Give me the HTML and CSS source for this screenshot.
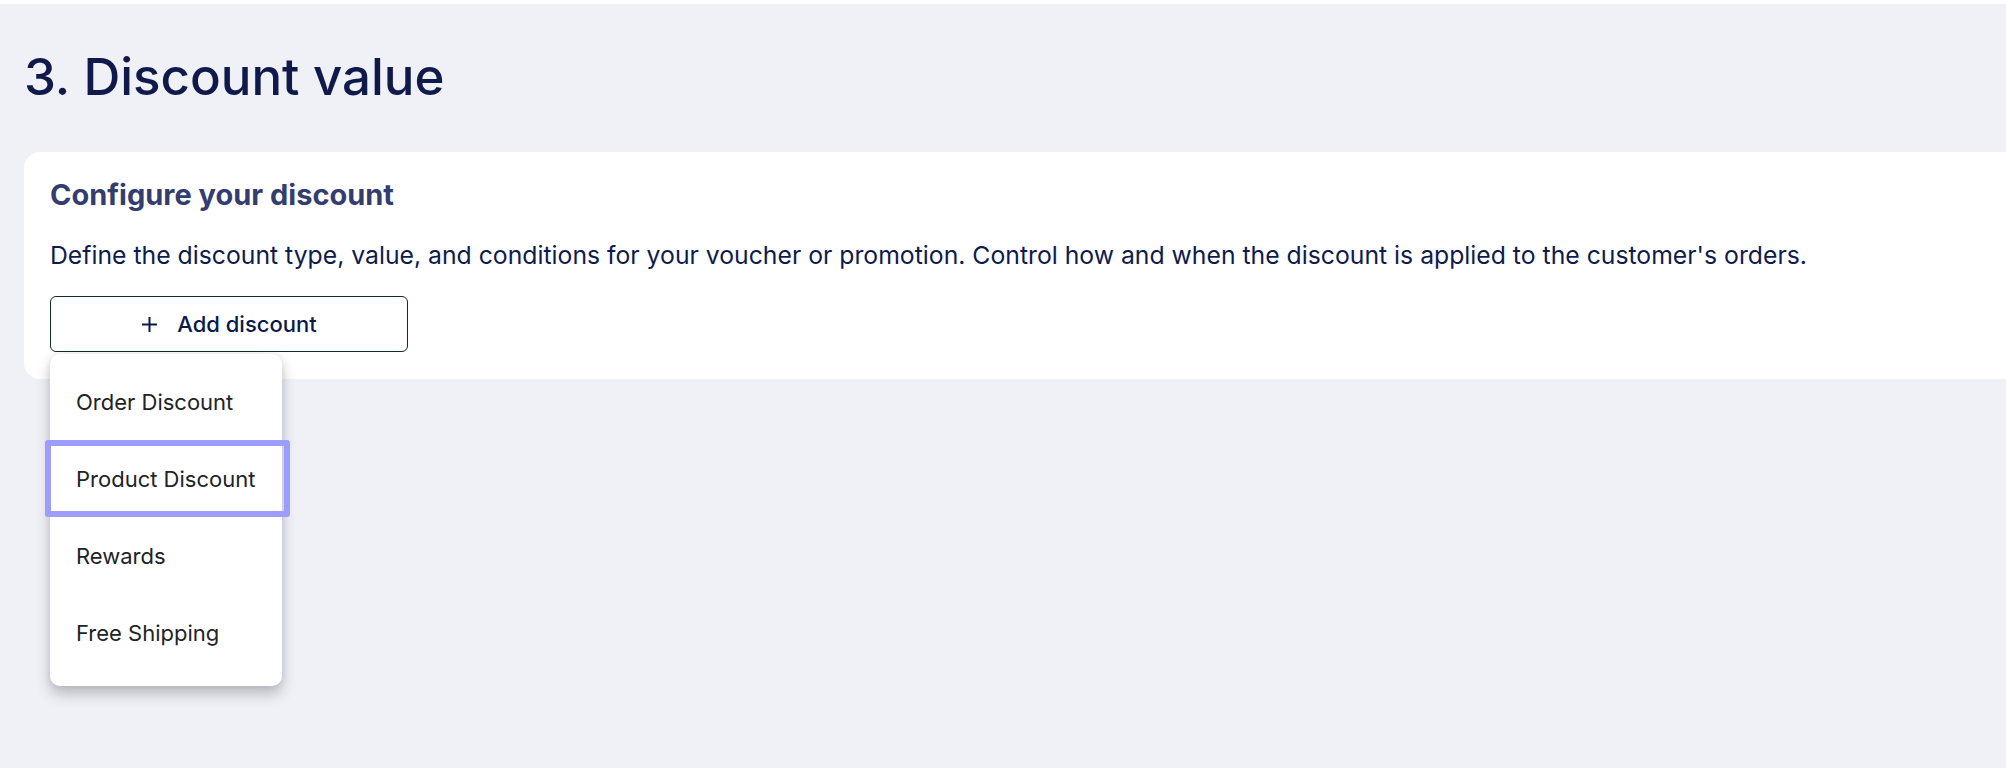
FILE: index.html
```html
<!DOCTYPE html>
<html lang="en">
<head>
<meta charset="utf-8">
<title>Discount value</title>
<link rel="stylesheet" href="styles.css">
</head>
<body>
<div class="page">
  <h1 class="page-title">3. Discount value</h1>
  <section class="card">
    <h2 class="card-title">Configure your discount</h2>
    <p class="card-desc">Define the discount type, value, and conditions for your voucher or promotion. Control how and when the discount is applied to the customer's orders.</p>
    <div class="add-wrap">
      <button class="add-btn" type="button">
        <svg class="plus" width="17" height="17" viewBox="0 0 17 17" aria-hidden="true"><path d="M8.5 1v15M1 8.5h15" stroke="#0b1a4a" stroke-width="2" fill="none"/></svg>
        <span>Add discount</span>
      </button>
      <ul class="menu">
        <li class="menu-item">Order Discount</li>
        <li class="menu-item is-focused">Product Discount</li>
        <li class="menu-item">Rewards</li>
        <li class="menu-item">Free Shipping</li>
      </ul>
    </div>
  </section>
</div>
</body>
</html>
```
FILE: styles.css
```css
* { box-sizing: border-box; }
html, body { margin: 0; padding: 0; }
body {
  background: #f0f1f6;
  font-family: Inter, "Noto Sans", "Liberation Sans", sans-serif;
  border-top: 4px solid #ffffff;
  min-height: 768px;
}
.page {
  padding: 41px 0 0 24px;
}
.page-title {
  margin: 0;
  font-size: 51px;
  line-height: 64px;
  font-weight: 500;
  color: #0f1a4b;
}
.card {
  margin-top: 43px;
  background: #ffffff;
  border-radius: 16px 0 0 16px;
  padding: 26px 0 27px 26px;
}
.card-title {
  margin: 0;
  font-size: 29px;
  line-height: 34px;
  font-weight: 700;
  color: #333e6e;
}
.card-desc {
  margin: 27px 0 0;
  font-size: 24.75px;
  line-height: 32px;
  font-weight: 400;
  color: #0e1b4d;
}
.add-wrap {
  position: relative;
  margin-top: 25px;
  width: 358px;
}
.add-btn {
  display: flex;
  align-items: center;
  justify-content: center;
  gap: 19px;
  width: 358px;
  height: 56px;
  background: #ffffff;
  border: 1px solid #0d2f26;
  border-radius: 6px;
  font-family: inherit;
  font-size: 22px;
  font-weight: 500;
  color: #0b1a4a;
  padding: 0;
}
.plus { display: block; }
.menu {
  position: absolute;
  top: calc(100% + 2px);
  left: 0;
  width: 232px;
  height: 332px;
  margin: 0;
  padding: 9px 0 0;
  list-style: none;
  background: #ffffff;
  border-radius: 10px;
  box-shadow: 0 8px 14px rgba(40, 40, 60, 0.28), 0 0 6px rgba(40, 40, 60, 0.08);
  z-index: 2;
}
.menu-item {
  position: relative;
  height: 77px;
  display: flex;
  align-items: center;
  padding-left: 26px;
  font-size: 22px;
  color: #222326;
}
.menu-item.is-focused::after {
  content: "";
  position: absolute;
  left: -5px;
  right: -8px;
  top: 0;
  bottom: 0;
  border: 6px solid #9d9cff;
  border-radius: 3px;
}
```
